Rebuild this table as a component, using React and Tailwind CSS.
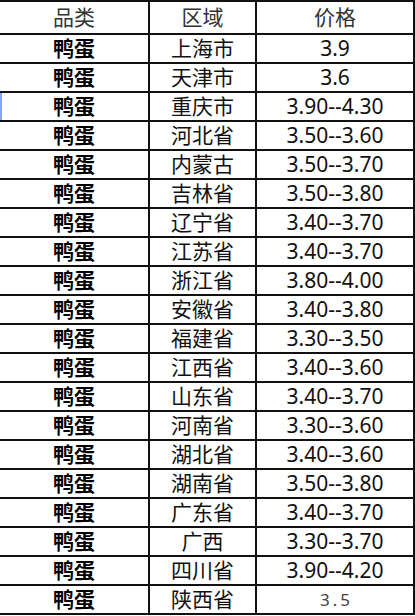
import React from 'react';

const rows = [
  ['上海市', '3.9'],
  ['天津市', '3.6'],
  ['重庆市', '3.90--4.30'],
  ['河北省', '3.50--3.60'],
  ['内蒙古', '3.50--3.70'],
  ['吉林省', '3.50--3.80'],
  ['辽宁省', '3.40--3.70'],
  ['江苏省', '3.40--3.70'],
  ['浙江省', '3.80--4.00'],
  ['安徽省', '3.40--3.80'],
  ['福建省', '3.30--3.50'],
  ['江西省', '3.40--3.60'],
  ['山东省', '3.40--3.70'],
  ['河南省', '3.30--3.60'],
  ['湖北省', '3.40--3.60'],
  ['湖南省', '3.50--3.80'],
  ['广东省', '3.40--3.70'],
  ['广西', '3.30--3.70'],
  ['四川省', '3.90--4.20'],
  ['陕西省', '3.5'],
];

const font = { fontFamily: '"Noto Sans", "Noto Sans CJK SC", sans-serif' };

const App = () => {
  return (
    <div className="w-[415px] h-[616px] bg-white text-[21px] leading-none" style={font}>
      <div className="border-t-2 border-[#111]">
        {/* header */}
        <div className="flex h-[33px] border-b-2 border-[#111] text-[#333]">
          <div className="w-[150px] border-r-2 border-[#111] flex items-center justify-center">品类</div>
          <div className="w-[107px] border-r-2 border-[#111] flex items-center justify-center">区域</div>
          <div className="w-[158px] border-r-2 border-[#111] flex items-center justify-center">价格</div>
        </div>
        {rows.map(([region, price], i) => (
          <div key={region} className="flex h-[29px] border-b-2 border-[#111] text-[#111]">
            <div
              className={`w-[150px] border-r-2 border-[#111] flex items-center justify-center font-bold text-black ${
                i === 2 ? 'shadow-[inset_2px_0_0_#86a6f2]' : ''
              }`}
            >
              鸭蛋
            </div>
            <div className="w-[107px] border-r-2 border-[#111] flex items-center justify-center">{region}</div>
            <div className="w-[158px] border-r-2 border-[#111] flex items-center justify-center">
              {i === rows.length - 1 ? (
                <span className="text-[17px] tracking-[3px] text-[#444] pl-[3px]">{price}</span>
              ) : (
                price
              )}
            </div>
          </div>
        ))}
      </div>
    </div>
  );
};

export default App;
